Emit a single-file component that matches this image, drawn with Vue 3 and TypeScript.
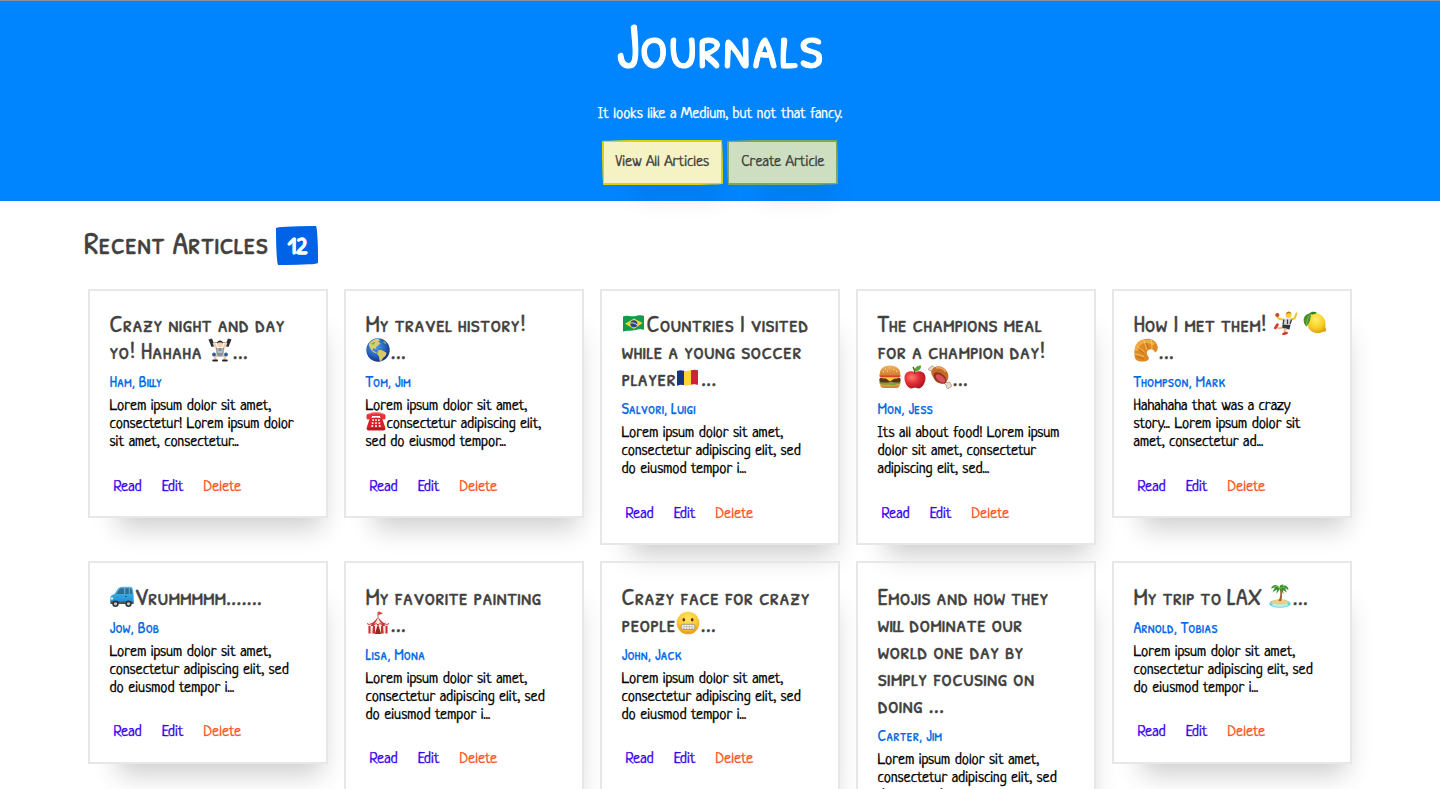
<script setup lang="ts">
type Piece = { t: string } | { icon: string }
interface Article {
  title: string[]
  author: string
  body: string[]
}

// Words in colons name a drawn emoji from the sprite.
const pieces = (line: string): Piece[] =>
  line
    .split(/(:\w+:)/)
    .filter((s) => s !== '')
    .map((s) => (/^:\w+:$/.test(s) ? { icon: s.slice(1, -1) } : { t: s }))

const lorem = [
  'Lorem ipsum dolor sit amet,',
  'consectetur adipiscing elit, sed',
  'do eiusmod tempor i...',
]

const articles: Article[] = [
  {
    title: ['Crazy night and day', 'yo! Hahaha :lifter:...'],
    author: 'Ham, Billy',
    body: ['Lorem ipsum dolor sit amet,', 'consectetur! Lorem ipsum dolor', 'sit amet, consectetur...'],
  },
  {
    title: ['My travel history!', ':globe:...'],
    author: 'Tom, Jim',
    body: ['Lorem ipsum dolor sit amet,', ':phone:consectetur adipiscing elit,', 'sed do eiusmod tempor...'],
  },
  {
    title: [':brazil:Countries I visited', 'while a young soccer', 'player:romania:...'],
    author: 'Salvori, Luigi',
    body: lorem,
  },
  {
    title: ['The champions meal', 'for a champion day!', ':burger::apple::meat:...'],
    author: 'Mon, Jess',
    body: ['Its all about food! Lorem ipsum', 'dolor sit amet, consectetur', 'adipiscing elit, sed...'],
  },
  {
    title: ['How I met them! :handball: :lemon:', ':croissant:...'],
    author: 'Thompson, Mark',
    body: ['Hahahaha that was a crazy', 'story... Lorem ipsum dolor sit', 'amet, consectetur ad...'],
  },
  { title: [':car:Vrummmmm.......'], author: 'Jow, Bob', body: lorem },
  { title: ['My favorite painting', ':tent:...'], author: 'Lisa, Mona', body: lorem },
  { title: ['Crazy face for crazy', 'people:grimace:...'], author: 'John, Jack', body: lorem },
  {
    title: ['Emojis and how they', 'will dominate our', 'world one day by', 'simply focusing on', 'doing ...'],
    author: 'Carter, Jim',
    body: lorem,
  },
  { title: ['My trip to LAX :island:...'], author: 'Arnold, Tobias', body: lorem },
]
</script>

<template>
  <svg class="sprite" aria-hidden="true">
    <symbol id="lifter" viewBox="0 0 24 24">
      <path d="M2 4.5H22" stroke="#9a9da0" stroke-width="1" />
      <path d="M0.500 1.5 4 .5 7 8 3.500 9zM17 8 20 .5 23.500 1.5 20.5 9z" fill="#2d3034" />
      <path d="M6 5.5 9 11.500M18 5.500 15 11.500" stroke="#f4cdb0" stroke-width="2.500" stroke-linecap="round" />
      <path d="M8 10h8l-.7 8.500H8.700z" fill="#8b9198" />
      <path d="M9 10h1.500v3h3v-3H15l-.5 5h-5z" fill="#b9bec4" />
      <circle cx="12" cy="6.500" r="3" fill="#f6d2b5" />
      <path d="M9 5.500C9 1.500 15 1.500 15 5.500L13.500 4.500h-3z" fill="#35281f" />
      <path d="M9.500 18 7 17.500 7.500 22M14.500 18l2.500-.5-.5 4.500" fill="none" stroke="#f1c6a6" stroke-width="2.200" />
      <circle cx="6" cy="16.500" r="1.900" fill="#2b5d9c" /><circle cx="18" cy="16.500" r="1.900" fill="#2b5d9c" />
      <path d="M5.200 22.500H9M15 22.500h3.800" stroke="#25282c" stroke-width="2" stroke-linecap="round" />
    </symbol>
    <radialGradient id="sea" cx=".4" cy=".35" r=".7">
      <stop offset="0" stop-color="#5b9be8" /><stop offset=".6" stop-color="#2460bd" /><stop offset="1" stop-color="#102c6c" />
    </radialGradient>
    <symbol id="globe" viewBox="0 0 24 24">
      <circle cx="12" cy="12" r="11.700" fill="url(#sea)" />
      <path d="M3.500 5C6 2 9 .8 12.500.7L14 2.500l-2 1 2.500 1.500-1.800 2-2.200 1.500-1 2.500-2.500-.8-.5 2 2.500 1.500 2 1-.5.8-3.500-1.500L4.500 11 2.800 7z" fill="#d6cf6b" />
      <path d="M12 12.500l3-.8 2.800 1.600 2.700 1.400-.8 3-2.500 2-2 3.300-1.700-.5-.5-4-1.800-2.600z" fill="#d9c96a" />
      <path d="M18 3l2.500 2.300-1.200.8-2-1.600zM4.500 6l3-2 2 .3-2 2.500z" fill="#87ad58" />
    </symbol>
    <symbol id="phone" viewBox="0 0 24 24">
      <path d="M4 10.500C6 7 18 7 20 10.500L23.300 20.500c.2 2-1 3-2.300 3H3c-1.300 0-2.500-1-2.300-3z" fill="#d9202b" />
      <path d="M.5 6C1 0 23 0 23.500 6l-.3 3.500c-1.700 1-4.500.8-6-.5L16.800 6H7.200L6.800 9c-1.500 1.300-4.300 1.500-6 .5z" fill="#e93036" />
      <path d="M3 3.800C7 1.500 17 1.500 21 3.800" fill="none" stroke="#ff9995" stroke-width="1" />
      <path d="M7.500 11h2M11 11h2M14.500 11h2M7 14.500h2M11 14.500h2M15 14.500h2M6.500 18h2M11 18h2M15.500 18h2" stroke="#fff2ea" stroke-width="2.200" />
      <path d="M2 21.500h20" stroke="#a40d19" stroke-width="1.300" />
    </symbol>
    <symbol id="brazil" viewBox="0 0 24 24">
      <path d="M1 5.500c4-2 7 .5 11-.3S19 3.500 22 4.800v14c-3-1.300-6-.4-10 .5S5 19 1 20.500z" fill="#129b4b" />
      <path d="M3 12.700l9-5.200 8.500 4.500L12 18z" fill="#fbd42b" />
      <circle cx="11.800" cy="12.700" r="3.500" fill="#25458f" />
      <path d="M8.500 12c2.500-.5 5 .3 6.500 1.900" fill="none" stroke="#fff" stroke-width=".8" />
    </symbol>
    <symbol id="romania" viewBox="0 0 24 24">
      <path d="M1 6c3-1.500 5-.7 7-.3v14.600c-2-.5-4-.8-7 .5z" fill="#15357f" />
      <path d="M8 5.700c3 .6 4.500.1 7-.5v14.500c-2.500.6-4 1.100-7 .6z" fill="#ffd42f" />
      <path d="M15 5.200c3-.7 5-.8 7 .1v14.600c-2-.9-4-.8-7-.2z" fill="#cf2138" />
    </symbol>
    <linearGradient id="bun" x1="0" y1="0" x2="0" y2="1">
      <stop offset="0" stop-color="#f3b25a" /><stop offset="1" stop-color="#cf7d2c" />
    </linearGradient>
    <symbol id="burger" viewBox="0 0 24 24">
      <path d="M2 18h20c0 4-1.500 5-4 5H6c-2.500 0-4-1-4-5z" fill="url(#bun)" />
      <path d="M1 17.500c3-2 4 0 7-.5s4 1.300 7 .5 5-1.500 8 0c-1 2.500-3 1.500-5 2s-4 .8-6 .2-4 .5-6 0-4 0-5-2.200z" fill="#6cab2f" />
      <rect x="1.300" y="12.500" width="21.400" height="5" rx="2.500" fill="#633019" />
      <path d="M2 11.500h20l-3 2-3 .2-4 2.800-4-3-4-.2z" fill="#ffce35" />
      <rect x="1.500" y="9.500" width="21" height="2.700" rx="1.300" fill="#d8432a" />
      <path d="M1.700 10.500C1.500 4 5 .6 12 .6S22.500 4 22.300 10.500z" fill="url(#bun)" />
      <path d="M7 4h1M11 3h1M15 4.500h1M9 6h1M18 6.500h1M5 7h1" stroke="#ffe3ac" />
    </symbol>
    <radialGradient id="red" cx=".35" cy=".35" r=".75">
      <stop offset="0" stop-color="#ff7a6b" /><stop offset=".5" stop-color="#e02a34" /><stop offset="1" stop-color="#a80f22" />
    </radialGradient>
    <symbol id="apple" viewBox="0 0 24 24">
      <path d="M12 7.500C8 5 1.500 6.500 1.500 13c0 5 3.500 10.500 7 10.500 1.500 0 2-.7 3.500-.7s2 .7 3.500.7c3.500 0 7-5.500 7-10.500 0-6.500-6.500-8-10.500-5.500z" fill="url(#red)" />
      <path d="M12 9c0-3-.5-5-2-7" fill="none" stroke="#6b3b1e" stroke-width="1.300" />
      <path d="M11.500 6.500C11.500 2.500 14 .5 18 .5c.2 3.500-2 6-6.500 6z" fill="#56a633" />
    </symbol>
    <symbol id="meat" viewBox="0 0 24 24">
      <path d="M5 6 1.500 5.500C-.3 5 .4 2.700 2.200 3 2.400 1 4.800 0 5.500 1.800L8 5zM14 16l4.500 4.500c-.5 3.300 2 4 3 2 2.300.3 3-2.800.8-3.700.2-2-2.300-2.300-3.300-.8L16 14z" fill="#e5dccd" stroke="#a99a89" stroke-width=".9" />
      <path d="M3.500 6C6-.5 15 0 19 6.500c2.500 4 1.500 9-2 11-5 2.500-9.500 0-11.500-4.500C4.500 10.500 2.500 9 3.500 6z" fill="#c46b26" />
      <path d="M8 3c4-1.500 8 .5 9.500 4" fill="none" stroke="#eaa556" stroke-width="1.800" />
      <ellipse cx="12" cy="13" rx="7.500" ry="4.500" transform="rotate(38 12 13)" fill="#94301f" />
      <ellipse cx="12.500" cy="13.500" rx="5.500" ry="3" transform="rotate(38 12.500 13.500)" fill="#d8525a" />
    </symbol>
    <symbol id="handball" viewBox="0 0 24 24">
      <path d="M10 9 4.500 7.500 2 3.800M15 9l5.500-1.500L22.500 2.500" fill="none" stroke="#fbbd2d" stroke-width="2" stroke-linecap="round" />
      <circle cx="3.400" cy="4" r="2" fill="#c54a36" />
      <circle cx="14.500" cy="4" r="2.900" fill="#ffca35" />
      <path d="M12 3C12.500-.3 17-.5 17.500 3L15 2z" fill="#b77724" />
      <path d="M9 7.500h9L16.500 15l-7-.5z" fill="#dcdcdc" />
      <path d="M13.500 8.500v4.500M10 8.500l-1 5M17.500 8.500 16 13" stroke="#373a40" stroke-width="1.300" />
      <path d="M8.500 13.500l8 .5-1 4.500-7.500-1.500z" fill="#33363c" />
      <path d="M8.500 16.500 5 17.500l-3-2M12.500 17.500l-2 2 1 3" fill="none" stroke="#e8b890" stroke-width="2" />
      <path d="M1.300 17 3.500 13.500M9.500 23l3-1" stroke="#db3929" stroke-width="2.600" stroke-linecap="round" />
    </symbol>
    <radialGradient id="yellow" cx=".45" cy=".3" r=".75">
      <stop offset="0" stop-color="#fff062" /><stop offset=".6" stop-color="#f7cf24" /><stop offset="1" stop-color="#d89b0b" />
    </radialGradient>
    <symbol id="lemon" viewBox="0 0 24 24">
      <path d="M5 6C8 1 16 1 20 6c2.500 3 3 6.500 2.300 10 .5 1.500 1.300 3 .5 4s-2.300.5-3.800 1.200C13 24 5 20.500 4.500 13z" fill="url(#yellow)" />
      <path d="M8 2.500C3 2 .3 6 .7 10c.3 3 1.300 4 2.800 5.500C6.500 12 8 8 8 2.500z" fill="#4b8f2f" />
      <path d="M7.500 3.500C5 6 3.500 10 3.700 14" fill="none" stroke="#8dc35c" stroke-width=".8" />
      <path d="M6 2.500C9 .2 12 .2 14 2 11.500 3.500 9 4 6 2.500z" fill="#3c7f2a" />
    </symbol>
    <symbol id="croissant" viewBox="0 0 24 24">
      <path d="M1 20C-1 12 2 3 9 1.500 15-.5 22 2 23.500 8c.8 3-.5 6-2.500 6.500-1.500-3.500-4-4-6.500-2.500-3 2-1.500 5 .5 8-.5 3-4.500 4-8 3.500C4 23.300 1.700 22.300 1 20z" fill="#dd8a24" />
      <path d="M2.500 13c0-5 3-8.500 7.500-9.500 4-.8 8 .5 10 3" fill="none" stroke="#f2a93f" stroke-width="3.500" />
      <path d="M.7 15.500 10 18.500M2.500 7.500 10.500 14M9.500 1.500 13 12M17.500 1.500 18 11" stroke="#f9cc78" stroke-width=".8" />
      <path d="M3 18.500 10 21M5 11l5 4.500M12 5l2.500 6" stroke="#b8661a" stroke-width=".8" />
    </symbol>
    <linearGradient id="paint" x1="0" y1="0" x2="0" y2="1">
      <stop offset="0" stop-color="#54bced" /><stop offset="1" stop-color="#168bd2" />
    </linearGradient>
    <symbol id="car" viewBox="0 0 24 24">
      <path d="M4.500 10 8 4.500C9 3 11 2.700 14 2.700h6c2 0 2.500 1 2.900 3l.8 6.300v6.500c0 1-.7 1.500-1.700 1.500H2c-1.300 0-1.700-1-1.700-2.500V14c0-2 1.700-3.300 4.200-4z" fill="url(#paint)" />
      <path d="M6.500 10 9.300 5.500c.5-1 1.200-1.300 2.700-1.300h2V10zM15.300 4.200h3.500V10h-3.500zM20 4.200c1.300 0 1.500.5 1.700 1.500l.6 4.300H20z" fill="#2f6f8c" />
      <path d="M.5 17.500h23V20H.5z" fill="#4b535a" />
      <circle cx="5.500" cy="19.800" r="3.200" fill="#303338" /><circle cx="18.500" cy="19.800" r="3.200" fill="#303338" />
      <circle cx="5.500" cy="19.800" r="1.600" fill="#c6cbd0" /><circle cx="18.500" cy="19.800" r="1.600" fill="#c6cbd0" />
      <path d="M.7 13.500h2.500v2H.7z" fill="#f5eebd" /><path d="M15 12.500h2" stroke="#115f96" />
    </symbol>
    <symbol id="tent" viewBox="0 0 24 24">
      <path d="M12 6V1" stroke="#8a6a4e" /><path d="M12.300.3 17 2.200 12.300 4.300z" fill="#e0392e" />
      <path d="M12 5.500c1.500 3 5.500 5 11 6.500l-1 2v8.500H2V14l-1-2c5.500-1.500 9.500-3.500 11-6.500z" fill="#f4e8e4" />
      <path d="M12 5.500c-.5 3-2 5.500-3.500 7L8 15H5l.5-2.500C8.500 10.500 11 8 12 5.500zM12 5.500c.5 3 2 5.500 3.500 7L16 15h3l-.5-2.500C15.500 10.500 13 8 12 5.500zM2.500 15h2v7.500H2.500zM7 15h2v7.500H6.300zM21.500 15h-2v7.500h2zM17 15h-2v7.500h2.700z" fill="#ce2e31" />
      <path d="M12 13 8.800 23h6.400z" fill="#a02424" />
      <path d="M1 12.500q2.500 2.500 4.500 0 2.500 2.500 4.500 0 2 2.500 4 0 2 2.500 4.500 0 2 2.500 4.500 0" fill="none" stroke="#ce3a37" />
    </symbol>
    <radialGradient id="face" cx=".5" cy=".3" r=".75">
      <stop offset="0" stop-color="#ffe763" /><stop offset=".6" stop-color="#fcc632" /><stop offset="1" stop-color="#e58b12" />
    </radialGradient>
    <symbol id="grimace" viewBox="0 0 24 24">
      <circle cx="12" cy="12" r="11.300" fill="url(#face)" />
      <ellipse cx="7.800" cy="8.700" rx="1.300" ry="1.800" fill="#56320c" /><ellipse cx="16.200" cy="8.700" rx="1.300" ry="1.800" fill="#56320c" />
      <rect x="5" y="13.300" width="14" height="5" rx="2" fill="#f7f7f4" stroke="#8b7b66" stroke-width=".7" />
      <path d="M5 15.800h14M8 13.500v4.600M10.700 13.500v4.600M13.300 13.500v4.600M16 13.500v4.600" stroke="#aaa9a4" stroke-width=".6" />
    </symbol>
    <symbol id="island" viewBox="0 0 24 24">
      <ellipse cx="12" cy="19.700" rx="10.800" ry="4" fill="#65d6e2" />
      <ellipse cx="12" cy="20.500" rx="8" ry="2.600" fill="#b6f0ee" />
      <path d="M3 18.500c3-4.500 14-5 18 0-4 2.500-14 2.500-18 0z" fill="#efcc82" />
      <path d="M10.500 17c2-4 2.500-8 1-12h1.700c1.300 4 1 8 0 12z" fill="#986333" />
      <path d="M12 4.500C9-.5 4.500.5 3 4.500l4-1-2.500 4.700L9 5.500 8.500 10zM12 4.500C11 1.500 13 .3 15.500.5L14.500 2c3-1.500 6 .5 6 4L17 4.500l2 4-4-2.500.5 4.500z" fill="#378f32" />
      <path d="M12 4.500C9 2 7 2 5 3.500M12 4.500c3-2 5-1.500 7 .5" fill="none" stroke="#77c24a" />
    </symbol>
  </svg>

  <div class="page">
    <header class="hero">
      <h1>Journals</h1>
      <p class="tagline">It looks like a Medium, but not that fancy.</p>
      <nav class="actions">
        <button class="btn view">View All Articles</button>
        <button class="btn create">Create Article</button>
      </nav>
    </header>

    <main>
      <h2>Recent Articles <span class="badge">12</span></h2>
      <section class="grid">
        <article v-for="(a, i) in articles" :key="i" class="card">
          <h3>
            <span v-for="(row, r) in a.title" :key="r" class="row">
              <template v-for="(p, k) in pieces(row)" :key="k">
                <svg v-if="'icon' in p" class="emoji" :class="p.icon"><use :href="'#' + p.icon" /></svg>
                <template v-else>{{ p.t }}</template>
              </template>
            </span>
          </h3>
          <h4>{{ a.author }}</h4>
          <p class="body">
            <span v-for="(row, r) in a.body" :key="r" class="row">
              <template v-for="(p, k) in pieces(row)" :key="k">
                <svg v-if="'icon' in p" class="emoji"><use :href="'#' + p.icon" /></svg>
                <template v-else>{{ p.t }}</template>
              </template>
            </span>
          </p>
          <div class="links"><a>Read</a><a>Edit</a><a class="danger">Delete</a></div>
        </article>
      </section>
    </main>
  </div>
</template>

<style>
body {
  background: #fff;
}
</style>

<style scoped>
.sprite {
  position: absolute;
  width: 0;
  height: 0;
}
.page {
  height: 789px;
  overflow: hidden;
  color: #41403e;
  font: 16px/18px 'Neucha', Lato, 'Open Sans', sans-serif;
  -webkit-text-stroke: 0.25px currentColor;
}
h1, h2, h3, h4, p {
  margin: 0;
  font-weight: 400;
}
h1, h2, h3, h4 {
  font-family: 'Patrick Hand SC', Lato, sans-serif;
}
.hero {
  box-sizing: border-box;
  height: 201px;
  border-top: 1px solid #8b9096;
  background: #0085ff;
  color: #fff;
  display: flex;
  flex-direction: column;
  align-items: center;
}
h1 {
  margin-top: 6px;
  font-size: 64px;
  line-height: 76px;
  -webkit-text-stroke-width: 1px;
}
.tagline {
  margin-top: 23px;
}
.actions {
  display: flex;
  gap: 4px;
  margin-top: 16px;
}
.btn {
  display: block;
  box-sizing: border-box;
  height: 45px;
  padding: 0 12px;
  border: 2px solid;
  border-radius: 255px 8px 225px 8px / 8px 225px 8px 255px;
  box-shadow: 15px 28px 25px -18px rgba(0, 0, 0, 0.2);
  color: #41403e;
  font: inherit;
}
.view {
  background: #f5f2c3;
  border-color: #ddd204;
}
.create {
  background: #cddec1;
  border-color: #7fa65c;
}
main {
  padding: 25px 84px 0;
}
h2 {
  display: flex;
  gap: 8px;
  font-size: 32px;
  line-height: 34px;
  -webkit-text-stroke-width: 0.5px;
}
.badge {
  padding: 0 11px;
  height: 39px;
  line-height: 38px;
  background: #0062e6;
  color: #fff;
  border-radius: 255px 15px 225px 15px / 15px 225px 15px 255px;
  font-size: 24px;
  font-weight: 700;
  -webkit-text-stroke-width: 0.2px;
}
.grid {
  display: grid;
  grid-template-columns: repeat(5, 240px);
  align-items: start;
  gap: 16px;
  padding: 24px 4px 0;
}
.card {
  box-sizing: border-box;
  padding: 19px 0 21px 19.500px;
  border: 2px solid #e6e7e9;
  box-shadow: 12px 28px 25px -18px rgba(0, 0, 0, 0.2);
}
.card:nth-child(n + 6) {
  padding-top: 20px;
}
.row {
  display: block;
  white-space: nowrap;
}
h3 {
  margin-bottom: 1px;
  font-size: 24px;
  line-height: 27px;
  -webkit-text-stroke-width: 0.4px;
}
h3 .row {
  height: 27px;
}
.emoji {
  width: 24px;
  height: 24px;
  margin: 1px 1px 0 0;
  vertical-align: top;
}
.handball {
  margin: 1px 0 0 1.500px;
}
h4 {
  height: 27px;
  color: #0067e6;
  font-size: 16px;
  line-height: 32px;
}
.body {
  margin-top: 6px;
  color: #000;
}
.body .row {
  height: 18px;
}
.body .emoji {
  width: 20px;
  height: 20px;
  margin: -5px 1px -5px 0;
}
.links {
  display: flex;
  gap: 20px;
  margin-top: 27px;
  padding-left: 4px;
  height: 16px;
  color: #3b00f0;
}
.card:nth-child(n + 6) .links {
  margin-top: 26px;
  height: 17px;
}
.danger {
  color: #ff5327;
}
</style>
